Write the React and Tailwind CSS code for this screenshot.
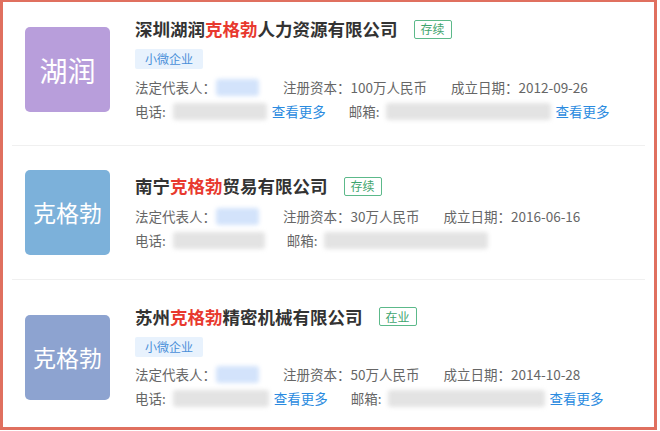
import React from "react";

const font = { fontFamily: '"Noto Sans CJK SC", "Noto Sans", sans-serif' };

function Blur({ w, blue }) {
  return (
    <span
      className={`inline-block h-[17px] rounded-[3px] blur-[2px] ${blue ? "bg-[#d3e3fb]" : "bg-[#e3e3e3]"}`}
      style={{ width: w }}
    />
  );
}

function Card({ h, logo, logoColor, logoSize, pre, post, status, small, capital, date, phoneW, emailGap, emailW, more, last }) {
  return (
    <div className={`${h} flex items-center ${last ? "pl-[22px]" : "border-b border-[#f0f0f0] mx-[9px] pl-[13px]"}`}>
      <div className={`w-[85px] h-[85px] rounded-[5px] ${logoColor} flex items-center justify-center text-white ${logoSize} shrink-0`}>
        {logo}
      </div>
      <div className="ml-[25px] flex flex-col">
        <div className="h-[22px] flex items-center">
          <span className="text-[17.5px] font-bold text-[#333] leading-none">
            {pre}
            <span className="text-[#e8392e]">克格勃</span>
            {post}
          </span>
          <span className="ml-[16px] h-[19px] px-[6px] border border-[#5cb98a] rounded-[2px] text-[12px] text-[#3fa56e] flex items-center leading-none">
            {status}
          </span>
        </div>
        {small && (
          <div className="mt-[9px] h-[20px] flex">
            <span className="px-[10px] bg-[#e8f2fd] text-[#4a8fd9] text-[12px] flex items-center rounded-[2px]">小微企业</span>
          </div>
        )}
        <div className={`${small ? "mt-[8px]" : "mt-[9px]"} h-[20px] flex items-center text-[13.5px] text-[#666] whitespace-nowrap`}>
          <span>法定代表人：</span>
          <Blur w={43} blue />
          <span className="ml-[24px]">注册资本：{capital}</span>
          <span className="ml-[24px]">成立日期：{date}</span>
        </div>
        <div className="mt-[4px] h-[20px] flex items-center text-[13.5px] text-[#666] whitespace-nowrap">
          <span>电话:</span>
          <span className="ml-[7px] flex"><Blur w={phoneW} /></span>
          {more && <span className="ml-[5px] text-[#2b8be0]">查看更多</span>}
          <span style={{ marginLeft: emailGap }}>邮箱:</span>
          <span className="ml-[6px] flex"><Blur w={emailW} /></span>
          {more && <span className="ml-[5px] text-[#2b8be0]">查看更多</span>}
        </div>
      </div>
    </div>
  );
}

export default function App() {
  return (
    <div className="w-[660px] h-[431px] bg-white" style={font}>
      <div className="w-[657px] h-[430px] border-l-[3px] border-t-2 border-r-[3px] border-b-[3px] border-[#e0705f] flex flex-col">
        <Card
          h="h-[144px] pb-[8px]"
          logo="湖润"
          logoColor="bg-[#b89edb]"
          logoSize="text-[28px]"
          pre="深圳湖润"
          post="人力资源有限公司"
          status="存续"
          small
          capital="100万人民币"
          date="2012-09-26"
          phoneW={94}
          emailGap={23}
          emailW={165}
          more
        />
        <Card
          h="h-[134px]"
          logo="克格勃"
          logoColor="bg-[#7cb1da]"
          logoSize="text-[23px]"
          pre="南宁"
          post="贸易有限公司"
          status="存续"
          capital="30万人民币"
          date="2016-06-16"
          phoneW={92}
          emailGap={22}
          emailW={164}
        />
        <Card
          h="flex-1 pt-[7px]"
          logo="克格勃"
          logoColor="bg-[#8da3d0]"
          logoSize="text-[23px]"
          pre="苏州"
          post="精密机械有限公司"
          status="在业"
          small
          capital="50万人民币"
          date="2014-10-28"
          phoneW={96}
          emailGap={23}
          emailW={157}
          more
          last
        />
      </div>
    </div>
  );
}
